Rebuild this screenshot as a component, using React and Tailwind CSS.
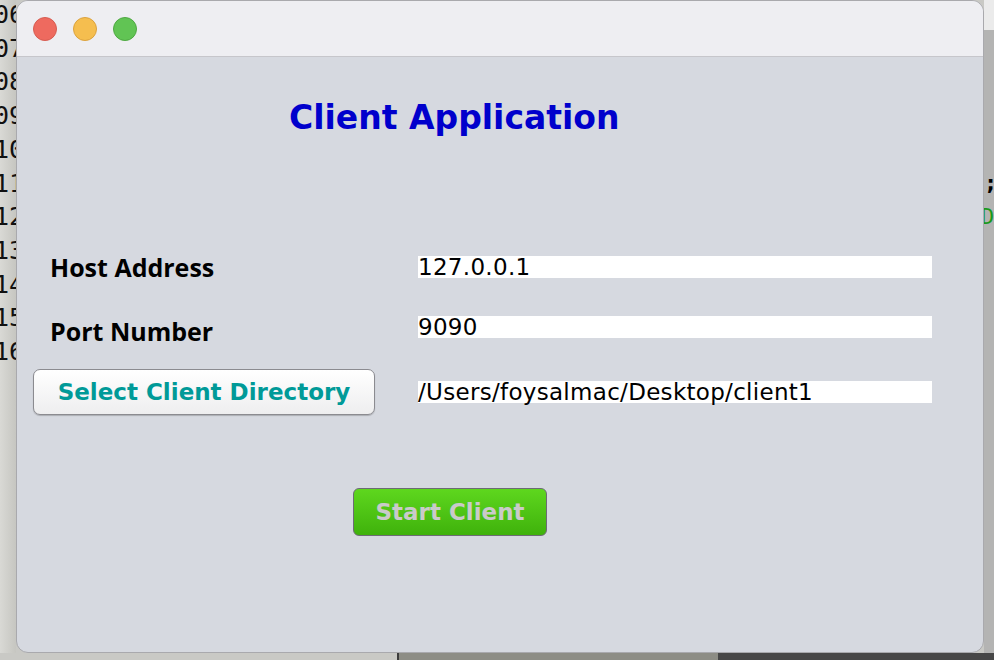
const lineNumbers = ['06', '07', '08', '09', '10', '11', '12', '13', '14', '15', '16'];

const TrafficLights = () => (
  <div className="flex items-center gap-4 pl-[16px]">
    <span className="h-6 w-6 rounded-full border border-[#d65c51] bg-[#ee6a5f]" />
    <span className="h-6 w-6 rounded-full border border-[#dba23e] bg-[#f5be4f]" />
    <span className="h-6 w-6 rounded-full border border-[#4ea842] bg-[#61c454]" />
  </div>
);

const Field = ({ value }) => (
  <div className="h-[22px] w-[514px] bg-white text-[23px] leading-[22px] tracking-[0.3px] text-black">{value}</div>
);

const Label = ({ children, className = '' }) => (
  <div className={`pl-[33px] text-[25px] font-bold leading-none text-black ${className}`} style={{ fontFamily: '"Open Sans", sans-serif' }}>
    {children}
  </div>
);

const ClientWindow = () => (
  <div className="flex h-[653px] w-[968px] flex-col overflow-hidden rounded-[12px] border border-[#a9a9ad] bg-[#d6d9e0]">
    <div className="flex h-[56px] shrink-0 items-center border-b border-[#c6c6cb] bg-[#eeeef2]">
      <TrafficLights />
    </div>

    <h1 className="ml-[272px] mt-[41px] h-[40px] text-[33px] font-bold leading-[40px] text-[#0000cc]">Client Application</h1>

    <div className="mt-[118px] grid grid-cols-[401px_514px]">
      <div className="flex h-[22px] items-center">
        <Label>Host Address</Label>
      </div>
      <Field value="127.0.0.1" />
    </div>

    <div className="mt-[38px] grid grid-cols-[401px_514px]">
      <div className="flex h-[22px] items-center">
        <Label className="mt-2">Port Number</Label>
      </div>
      <Field value="9090" />
    </div>

    <div className="mt-[31px] grid h-[46px] grid-cols-[401px_514px] items-center">
      <div className="pl-[16px]">
        <button className="flex h-[46px] w-[342px] items-center justify-center rounded-[7px] border border-[#8b8b90] bg-gradient-to-b from-white to-[#eeeeef] text-[23px] font-bold text-[#009a98] shadow-[0_1px_1px_rgba(0,0,0,0.2)]">
          Select Client Directory
        </button>
      </div>
      <Field value="/Users/foysalmac/Desktop/client1" />
    </div>

    <div className="mt-[73px] pl-[336px]">
      <button className="flex h-[48px] w-[194px] items-center justify-center rounded-[6px] border border-[#6c6c74] bg-gradient-to-b from-[#5ed71e] to-[#3fb20b] text-[23px] font-bold text-[#cacaca]">
        Start Client
      </button>
    </div>
  </div>
);

export default function App() {
  return (
    <div className="flex h-[660px] w-[994px] flex-col overflow-hidden bg-[#c9c9c5]" style={{ fontFamily: '"DejaVu Sans", sans-serif' }}>
      <div className="flex h-[653px]">
        <div className="w-[16px] shrink-0 overflow-hidden bg-gradient-to-r from-[#d9d9d5] to-[#c6c6c1]">
          <div className="-ml-[6px] -mt-[2px] text-[25px] leading-[33.7px] text-[#111]" style={{ fontFamily: '"DejaVu Sans Mono", monospace' }}>
            {lineNumbers.map((n) => (
              <div key={n}>{n}</div>
            ))}
          </div>
        </div>
        <ClientWindow />
        <div className="flex w-[10px] shrink-0 flex-col overflow-hidden bg-[#b4b4b3]">
          <div className="h-[30px] bg-[#ebebeb]" />
          <div className="mt-[136px] text-[22px] font-bold leading-[34px] text-black" style={{ fontFamily: '"DejaVu Sans Mono", monospace' }}>;</div>
          <div className="-ml-[3px] text-[22px] leading-[34px] text-[#1a9a1a]" style={{ fontFamily: '"DejaVu Sans Mono", monospace' }}>D</div>
        </div>
      </div>
      <div className="flex h-[7px]">
        <div className="w-[397px] bg-[#c9c9c5]" />
        <div className="w-[2px] bg-[#3c3c3c]" />
        <div className="w-[319px] bg-[#8d8d85]" />
        <div className="flex-1 bg-[#474747]" />
      </div>
    </div>
  );
}
